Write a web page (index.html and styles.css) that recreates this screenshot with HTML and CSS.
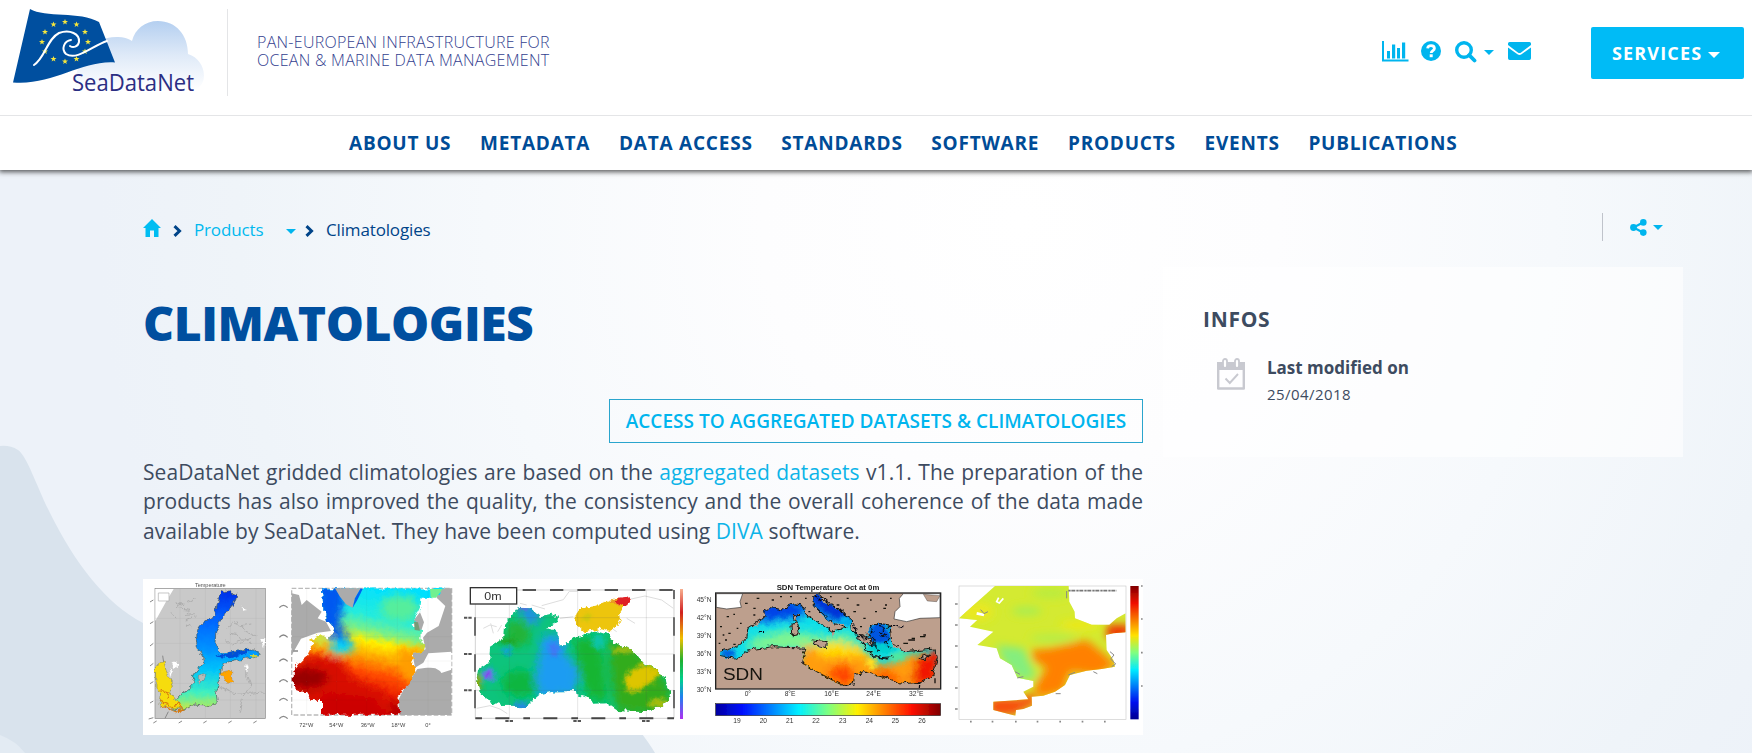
FILE: index.html
```html
<!DOCTYPE html>
<html lang="en">
<head>
<meta charset="utf-8">
<title>Climatologies - SeaDataNet</title>
<link rel="stylesheet" href="styles.css">
</head>
<body>
<header class="header">
  <div class="topbar">
    <svg class="logo" width="214" height="96" viewBox="0 0 214 96">
      <defs>
        <linearGradient id="cloud" x1="0" y1="0" x2="0" y2="1">
          <stop offset="0" stop-color="#b4cff0"/><stop offset=".5" stop-color="#dfeaf8"/><stop offset="1" stop-color="#ffffff"/>
        </linearGradient>
        <path id="star" d="M0-3.1.8-1H3L1.2.4 1.9 2.6 0 1.3-1.9 2.6-1.2.4-3-1H-.8Z"/>
      </defs>
      <path d="M75 88C75 60 92 36 118 37Q126 37 132 41C135 29 145 21 158 21C176 21 188 35 188 54C198 57 204 66 204 76Q204 84 196 90Z" fill="url(#cloud)"/>
      <path d="M30 9C45 18 80 11 99 22L115 62.500C82 60 52 86 13 82.500Z" fill="#004f9f"/>
      <g fill="#f5e63c">
        <use href="#star" x="65" y="22"/><use href="#star" x="76.500" y="24.500"/><use href="#star" x="85" y="32"/><use href="#star" x="88" y="42"/><use href="#star" x="85" y="51.500"/><use href="#star" x="76.500" y="59"/><use href="#star" x="65" y="61.500"/><use href="#star" x="53.500" y="59"/><use href="#star" x="45" y="51.500"/><use href="#star" x="42" y="42"/><use href="#star" x="45" y="32"/><use href="#star" x="53.500" y="24.500"/>
      </g>
      <path d="M34 65C45 58 47 39 59 33C70 29 80 34 79 42C78 47 73 48 70 46M71 40C64 41 61 49 66 54C77 61 92 46 107 41" fill="none" stroke="#fff" stroke-width="2" stroke-linecap="round"/>
      <text class="logo-text" x="72" y="90.500" textLength="122" lengthAdjust="spacingAndGlyphs">SeaDataNet</text>
    </svg>
    <p class="tagline">PAN-EUROPEAN INFRASTRUCTURE FOR<br>OCEAN &amp; MARINE DATA MANAGEMENT</p>
    <div class="tools">
      <svg class="icon-chart" width="27" height="21" viewBox="0 0 27 21"><path d="M1 0V19.500H26.500" fill="none" stroke="#00b5ee" stroke-width="2"/><path d="M5 10h3v7.500H5zM10 3.500h3.200v14H10zM15 7h3v10.500h-3zM20 1.500h3.200v16H20z" fill="#00b5ee"/></svg>
      <svg class="icon-help" width="20" height="20" viewBox="0 0 20 20"><circle cx="10" cy="10" r="10" fill="#00b5ee"/><path d="M6.600 7.300C7 3.700 13.400 3.600 13.400 7.500C13.400 9.500 10.200 9.800 10.200 12" fill="none" stroke="#fff" stroke-width="2.800"/><path d="M8.700 13.300h3v2.900h-3z" fill="#fff"/></svg>
      <svg class="icon-search" width="22" height="22" viewBox="0 0 22 22"><circle cx="9" cy="9" r="7.300" fill="none" stroke="#00b5ee" stroke-width="3.400"/><path d="M14.200 14.200 19.500 19.500" stroke="#00b5ee" stroke-width="3.800" stroke-linecap="round"/></svg>
      <i class="caret caret-search"></i>
      <svg class="icon-mail" width="23" height="18" viewBox="0 0 23 18"><path d="M0 1.500Q0 0 1.500 0H21.500Q23 0 23 1.500V3L12.800 10.700Q11.500 11.500 10.200 10.700L0 3ZM0 5.500 9.500 12.300Q11.500 13.500 13.500 12.300L23 5.500V16.300Q23 18 21.300 18H1.700Q0 18 0 16.300Z" fill="#00b5ee"/></svg>
    </div>
    <a class="services"><span>SERVICES</span><i class="caret caret-white"></i></a>
  </div>
  <nav class="nav">
    <a class="nav-item">ABOUT US</a><a class="nav-item">METADATA</a><a class="nav-item">DATA ACCESS</a><a class="nav-item">STANDARDS</a><a class="nav-item">SOFTWARE</a><a class="nav-item">PRODUCTS</a><a class="nav-item">EVENTS</a><a class="nav-item">PUBLICATIONS</a>
  </nav>
</header>
<div class="page">
  <svg class="backdrop" viewBox="0 0 1752 583" width="1752" height="583">
    <path d="M0 276Q10 275 18 280C27 286 37 317 50 343C75 393 105 433 143 453L600 513Q645 565 655 583H0Z" fill="#d9e3ed"/>
    <path d="M0 565Q16 571 25 583H0Z" fill="#e3ebf3"/>
  </svg>
  <div class="crumb-row">
    <div class="crumbs">
      <svg class="icon-home" width="18" height="18" viewBox="0 0 18 18"><path d="M9 0 18 9H15.500V18H11V11.500H7V18H2.500V9H0Z" fill="#00bdf2"/></svg>
      <svg class="chevron-first" width="9" height="12" viewBox="0 0 9 12"><path d="M1.500 1.200 6.500 6 1.500 10.800" fill="none" stroke="#004489" stroke-width="3"/></svg>
      <a class="crumb-link">Products</a>
      <i class="caret caret-crumb"></i>
      <svg class="chevron-second" width="9" height="12" viewBox="0 0 9 12"><path d="M1.500 1.200 6.500 6 1.500 10.800" fill="none" stroke="#004489" stroke-width="3"/></svg>
      <span class="crumb-current">Climatologies</span>
    </div>
    <div class="share">
      <svg width="17" height="17" viewBox="0 0 17 17"><path d="M13 3.500 3.500 8.500 13 13.500" fill="none" stroke="#00b5ee" stroke-width="2.200"/><g fill="#00b5ee"><circle cx="3.500" cy="8.500" r="3.400"/><circle cx="13.300" cy="3.400" r="3.300"/><circle cx="13.300" cy="13.600" r="3.300"/></g></svg>
      <i class="caret"></i>
    </div>
  </div>
  <div class="columns">
    <main class="main">
      <h1 class="title">CLIMATOLOGIES</h1>
      <div class="button-row"><a class="access">ACCESS TO AGGREGATED DATASETS &amp; CLIMATOLOGIES</a></div>
      <p class="intro">SeaDataNet gridded climatologies are based on the <a class="link">aggregated datasets</a> v1.1. The preparation of the products has also improved the quality, the consistency and the overall coherence of the data made available by SeaDataNet. They have been computed using <a class="link">DIVA</a> software.</p>
      <svg class="maps" width="1000" height="156" viewBox="0 0 1000 156">
        <defs>
          <filter id="soft" x="-5%" y="-5%" width="110%" height="110%"><feGaussianBlur stdDeviation="1.500"/></filter>
          <filter id="coast" x="-5%" y="-5%" width="110%" height="110%"><feTurbulence type="fractalNoise" baseFrequency=".055" numOctaves="3" seed="4" result="n"/><feDisplacementMap in="SourceGraphic" in2="n" scale="20" xChannelSelector="R" yChannelSelector="G"/></filter>
          <filter id="melt" x="-30%" y="-30%" width="160%" height="160%"><feGaussianBlur stdDeviation="13"/></filter>
          <filter id="melt-small" x="-40%" y="-40%" width="180%" height="180%"><feGaussianBlur stdDeviation="7"/></filter>
          <linearGradient id="jet" x1="0" x2="1" y1="0" y2="0"><stop offset="0" stop-color="#0000a0"/><stop offset=".12" stop-color="#0010ff"/><stop offset=".37" stop-color="#00f0ff"/><stop offset=".5" stop-color="#7dff80"/><stop offset=".63" stop-color="#fff000"/><stop offset=".87" stop-color="#ff1000"/><stop offset="1" stop-color="#800000"/></linearGradient>
          <linearGradient id="jet-down" x1="0" x2="0" y1="0" y2="1"><stop offset="0" stop-color="#800000"/><stop offset=".13" stop-color="#f01000"/><stop offset=".37" stop-color="#ffe000"/><stop offset=".5" stop-color="#80ff80"/><stop offset=".63" stop-color="#00eaff"/><stop offset=".87" stop-color="#0010f0"/><stop offset="1" stop-color="#000090"/></linearGradient>
          <linearGradient id="rainbow" x1="0" x2="0" y1="0" y2="1"><stop offset="0" stop-color="#f8b090"/><stop offset=".18" stop-color="#d02020"/><stop offset=".38" stop-color="#f0c000"/><stop offset=".55" stop-color="#20b030"/><stop offset=".7" stop-color="#00d090"/><stop offset=".83" stop-color="#2080f0"/><stop offset="1" stop-color="#b030f0"/></linearGradient>
          <linearGradient id="baltic" x1="0" x2="0" y1="0" y2="1"><stop offset="0" stop-color="#0030e8"/><stop offset=".22" stop-color="#0060ff"/><stop offset=".5" stop-color="#0095ff"/><stop offset=".66" stop-color="#00c5fa"/><stop offset=".85" stop-color="#40f0c0"/><stop offset="1" stop-color="#d0e840"/></linearGradient>
          <linearGradient id="atlantic" gradientUnits="userSpaceOnUse" x1="720" y1="40" x2="640" y2="420"><stop offset="0" stop-color="#00e0ff"/><stop offset=".22" stop-color="#25ecdd"/><stop offset=".34" stop-color="#80f080"/><stop offset=".42" stop-color="#fff000"/><stop offset=".53" stop-color="#ffa800"/><stop offset=".66" stop-color="#ff4a00"/><stop offset=".9" stop-color="#e00800"/></linearGradient>
          <clipPath id="clip-atlantic"><path d="M546 40H912L898 58 870 68H842L838 100 818 150 840 165 838 192 856 212 850 230 818 236 816 270 830 280 808 325 782 350 774 372 778 419H546V378L512 374 500 352 468 345 458 330V290L476 266 500 245 512 220 520 200 506 195 540 178 562 190 575 180 583 160 562 136 550 100Z"/></clipPath>
          <clipPath id="clip-black"><path d="M176 95 212 97 240 124 275 116 294 125 292 142 258 160 284 166 295 175 297 212 315 210 345 188 370 182 372 174 395 176 410 166 445 177 450 195 475 210 515 224 545 260 590 285 604 302 618 310 620 330 631 350 625 375 600 395 560 408 470 405 440 385 400 386 390 370 350 360 348 348 285 349 240 358 205 388 185 402 175 392 125 393 82 376 65 358 62 335 48 325 54 285 80 268 88 255 90 215 130 190 132 150 165 110Z"/></clipPath>
          <clipPath id="clip-med"><path d="M90 229 110 224 150 210 170 188 174 160 205 146 222 128 222 108 240 98 275 105 310 86 334 90 350 120 385 140 425 168 428 195 405 212 372 202 365 197 372 212 408 218 440 165 470 160 460 148 430 145 395 118 370 90 368 70 385 57 400 80 455 112 480 125 484 165 510 185 540 180 534 155 565 145 600 150 600 185 610 215 640 230 700 225 738 222 742 250 725 305 690 322 640 326 575 308 520 290 495 300 488 330 465 335 430 320 380 290 345 270 335 245 348 220 330 215 250 215 175 225 140 250 105 248 90 242Z"/></clipPath>
          <clipPath id="clip-red"><path d="M165 33H386L388 80 404 110 405 130 455 149 508 149 530 130 557 115V172L520 175 498 180 500 225 520 255 525 275 485 282 440 287 390 300 375 330 345 350 310 362 275 365 276 392 250 402 228 405 226 422 160 405V380L265 373 250 350 280 335 280 318 232 308 215 270 180 250 170 220 112 210 160 170 90 155 112 135 57 130Z"/></clipPath>
        </defs>
        <rect width="1000" height="156" fill="#fff"/>
        <g transform="translate(-3 -4) scale(.33333)" filter="url(#soft)">
          <text class="map-label" x="165" y="35" textLength="92" font-size="17" fill="#555">Temperature</text>
          <rect x="45" y="41" width="331" height="390" fill="#c9c9c9" stroke="#888" stroke-width="2"/>
          <path d="M46 42H101L78 80 46 138Z" fill="#fff"/><path d="M55 54h32v24H55z" fill="#fff" stroke="#aaa" stroke-width="2"/>
          <path d="M120 42V430M196 42V430M271 42V430M348 42V430M46 130H375M46 205H375M46 325H375M46 375H375" stroke="#b5b5b5"/>
          <g filter="url(#coast)">
          <path d="M110 80l18 8-22 12 45 6-15 12 28-2M96 115l15 18M140 80l25-12M170 120l-30 15M135 150l22 8M260 160l20-18 28 12 12 18 26 10M265 175l25 3 15 18 30-6M255 190l18 18 28-10M290 140l12 12 32-5M300 205l22-10 18 14M230 330l40 20 60 8 40-4M320 290l12 40-25 40-10 45" fill="none" stroke="#a0a0a0" stroke-width="2"/>
          <path d="M360 190l12 30 4-30zM315 268l12 8-5 16zM95 265l18-3-3 15-8 5zM306 95l14 3-8 10zM90 280l10 8-7 20z" fill="#fff"/>
          <path d="M238 65Q245 48 265 48L290 58 287 78Q282 92 268 95L250 125 234 143Q238 160 230 178L228 205Q230 225 245 232L270 235Q305 220 340 222L361 238 335 247 270 260 245 272 238 310 228 350 232 380 210 392 165 387 130 407 95 402 106 375 130 350 158 340Q155 315 165 295L193 262 178 225Q164 200 172 170Q180 148 195 142L223 125Z" fill="url(#baltic)" stroke="#455" stroke-width="2"/>
          <path d="M225 245 285 230 335 222 325 234 270 250Z" fill="#0050d8"/><path d="M325 236 361 238 338 245Z" fill="#c9d040"/>
          <path d="M46 275 72 260 80 290 100 330 92 355 106 372 135 402 95 398 60 390 65 355 48 340Z" fill="#f6dc10" stroke="#885" stroke-width="2"/>
          <path d="M60 378l35 15 18-6 18 18-20 6-45-18M65 350l20 4-4 18" fill="none" stroke="#d87a10" stroke-width="4"/>
          <path d="M237 292 275 286 276 313 264 326 252 307Z" fill="#ffa400" stroke="#777"/><path d="M175 303l20-5-8 20-12 8z" fill="#b7bcb8" stroke="#555"/>
          </g>
          <path d="M68 242l3 20M75 430l10-20M40 75l-10 6M40 140l-10 6M40 205l-10 8M40 265l-10 8M40 320l-10 6M40 378l-10 6M40 428l-14 4M50 438l-10 6M126 438l-10 6M200 438l-10 6M275 438l-10 6M350 438l-10 6" stroke="#888" stroke-width="3"/>
          <rect x="455" y="40" width="480" height="380" fill="#fff" stroke="#bbb" stroke-width="4" stroke-dasharray="14 6"/>
          <path d="M455 55l22 5 8 30 15-15 45 35-12 20 25 10 15 28-40 5-50 18-28 50V55zM842 172l-22-35 20-25 12 30zM890 68l5-28h40V230l-70 5-15 28-25 15-8-45 40-10-8-35 12-15 35-20 20-60zM832 282l60-8 12 20 30-10V420H778L775 375 790 345Z" fill="#ababab"/>
          <path d="M845 275q30-15 45-40l20 8 24-10v45l-30 12-18-10z" fill="#fff"/>
          <g filter="url(#coast)"><g clip-path="url(#clip-atlantic)">
            <rect x="455" y="38" width="480" height="384" fill="url(#atlantic)"/>
            <g filter="url(#melt)"><path d="M525 20H620L600 150 635 200 600 215 540 150Z" fill="#0059f0"/><ellipse cx="605" cy="215" rx="38" ry="20" fill="#00d8ff"/><ellipse cx="540" cy="192" rx="28" ry="12" fill="#b0f060"/><path d="M430 290 510 240 600 250 640 310 740 350 780 440H430Z" fill="#d80800"/><ellipse cx="490" cy="310" rx="75" ry="32" fill="#980000"/><path d="M550 350 700 370 760 440H540Z" fill="#cc0500"/><ellipse cx="780" cy="100" rx="60" ry="40" fill="#55ee9c"/><path d="M765 220h100v85l-70 20z" fill="#ff9d00"/><ellipse cx="768" cy="410" rx="14" ry="36" fill="#a80000"/></g>
          </g></g>
          <path d="M585 40H662L645 70 638 98 618 88 600 65Z" fill="#ababab"/><path d="M662 40 645 70 638 98 652 75 668 42Z" fill="#0060f0"/>
          <path d="M870 42h38l-20 26h-16z" fill="#70f090"/><path d="M822 140l12 2 6 25-16-2z" fill="#779a77"/>
          <path d="M500 42V418M590 42V418M680 42V418M772 42V418M864 42V418M456 185H935M456 258H935M456 320H935M456 375H935" stroke="#776" stroke-opacity=".18"/>
          <path d="M418 98q12-14 25 0M418 187q12-14 25 0M418 259q12-14 25 0M418 321q12-14 25 0M418 377q12-14 25 0M418 431q12-14 25 0M460 228h14" fill="none" stroke="#888" stroke-width="4"/>
          <g class="map-label" font-size="17" fill="#444"><text x="478" y="456">72°W</text><text x="568" y="456">54°W</text><text x="662" y="456">36°W</text><text x="754" y="456">18°W</text><text x="856" y="456">0°</text></g>
        </g>
        <g transform="translate(317 -4) scale(.33333)" filter="url(#soft)">
          <path d="M46 45H642V430H46Z" fill="#fff" stroke="#bbb" stroke-width="2"/>
          <path d="M188 45H642" stroke="#555" stroke-width="6" stroke-dasharray="40 42"/><path d="M46 430H642" stroke="#444" stroke-width="6" stroke-dasharray="20 40 42 42"/><path d="M45 127V182M45 238V290M45 345V400M642 45V72M642 127V182M642 238V290M642 345V400" stroke="#555" stroke-width="5"/>
          <path d="M245 92l65-18 18-25h25M500 75l55-12 50 12 35 25M70 160l20-10 20 5M92 145l8 30M125 150l-12 20M180 85l20 5M215 90l40 12M50 400l40-8 30 10 22 14M300 130l40-5M500 130l25 15M440 150l30 20" fill="none" stroke="#ddd" stroke-width="3"/>
          <g filter="url(#coast)">
          <g clip-path="url(#clip-black)"><rect x="40" y="85" width="600" height="330" fill="#08c47b"/><g filter="url(#melt)"><ellipse cx="175" cy="175" rx="38" ry="40" fill="#20b438"/><ellipse cx="180" cy="325" rx="55" ry="38" fill="#10b640"/><path d="M245 180H305L320 240 360 290 340 360 240 370 225 310Z" fill="#1f9cf2"/><path d="M200 85 245 130 220 150 180 120Z" fill="#248af0"/><path d="M345 190 400 190 430 240 440 380 390 370 350 280Z" fill="#14b532"/><path d="M450 180 580 260 640 360 590 420 470 410 450 300Z" fill="#31ac1d"/></g><g filter="url(#melt-small)"><path d="M495 310 515 285 550 265 605 285 580 320 540 345 500 350Z" fill="#ddc500"/><ellipse cx="490" cy="225" rx="38" ry="10" fill="#a5bd10"/><ellipse cx="600" cy="385" rx="35" ry="13" fill="#a9bd10"/><circle cx="87" cy="298" r="22" fill="#18a8d0"/><circle cx="86" cy="299" r="13" fill="#8a30f0"/><ellipse cx="140" cy="228" rx="14" ry="10" fill="#18a0dd"/><ellipse cx="185" cy="395" rx="28" ry="14" fill="#208ae0"/><ellipse cx="282" cy="222" rx="14" ry="25" fill="#3f78f5"/><ellipse cx="415" cy="200" rx="18" ry="22" fill="#10c4a8"/><ellipse cx="54" cy="325" rx="12" ry="30" fill="#8aa810"/><ellipse cx="190" cy="98" rx="20" ry="8" fill="#6560f0"/><ellipse cx="142" cy="198" rx="28" ry="10" fill="#22a421"/></g></g>
          <path d="M344 125 362 100 410 92 450 75 475 68 490 95 480 110 482 130 470 155 450 168 425 160 395 168 372 172 352 152Z" fill="#edc50c"/><path d="M450 76 475 68 492 78 496 92 470 90Z" fill="#ed9a20"/><path d="M474 68 512 64 511 85 490 94 470 82Z" fill="#df2025"/><circle cx="380" cy="128" r="14" fill="#d0c810" filter="url(#melt-small)"/>
          </g>
          <path d="M148 90V430M353 46V430M559 46V430M46 128H642M46 237H642M46 346H642" stroke="#555" stroke-opacity=".22" stroke-width="2"/>
          <rect x="31" y="38" width="139" height="49" fill="#fff" stroke="#333" stroke-width="4"/><text class="map-label" x="73" y="76" font-size="34" textLength="52" lengthAdjust="spacingAndGlyphs" fill="#333">0m</text>
          <path d="M12 128H38M12 237H38M12 346H38M136 438h24M340 438h24M546 438h24" stroke="#555" stroke-width="6" stroke-dasharray="10 3"/>
          <rect x="660" y="42" width="9" height="390" fill="url(#rainbow)"/>
        </g>
        <g transform="translate(547 -4) scale(.33333)" filter="url(#soft)">
          <text class="map-label map-bold" x="260" y="45" textLength="308" lengthAdjust="spacingAndGlyphs" font-size="20" fill="#222">SDN Temperature Oct at 0m</text>
          <rect x="77" y="54" width="675" height="288" fill="#bd9f8d" stroke="#222" stroke-width="4"/>
          <path d="M79 56H158L150 80 154 97 110 102 79 97ZM640 56H750V128L690 130 650 140 612 132 615 110 630 95 628 70Z" fill="#fff" stroke="#333" stroke-width="2"/><path d="M700 58 750 62 740 80 712 78Z" fill="#bd9f8d" stroke="#222"/>
          <path d="M165 85h8M190 100h7M200 70h8M245 75h7M270 65h6M110 125h7M130 118h5M90 155h6M115 175h7M140 160h5M105 195h6M130 208h7M150 145h5M190 120h6M300 65h6M345 70h5M420 65h5M440 90h8M500 90h8M540 75h5M580 100h8M600 70h5M520 130h7M555 110h6M640 205h14M655 195h20M665 190h10M690 185h16M700 180h8M585 90h6M490 110h8M510 155h6M355 110h6M735 310v15M98 180h5M86 205h5M470 70h6" stroke="#171310" stroke-width="4"/>
          <g filter="url(#coast)">
          <g clip-path="url(#clip-med)"><rect x="78" y="56" width="674" height="284" fill="#10dfe8"/><g filter="url(#melt)"><path d="M210 80H350L340 125 260 135 210 145Z" fill="#0040e8"/><path d="M350 40H420L500 120 470 145 420 135 360 90Z" fill="#0030d8"/><path d="M175 195 290 165 410 185 470 175 530 220 400 225 180 225Z" fill="#80f590"/><path d="M330 220 440 200 520 220 560 270 620 260 650 240 750 230V350H320Z" fill="#ff9d08"/><path d="M380 220 430 200 530 230 545 245 380 240Z" fill="#ffe100"/><path d="M400 290 470 265 500 300 470 345Z" fill="#ff4300"/><path d="M680 250 760 215 735 330 660 330Z" fill="#f01800"/><path d="M540 285 600 285 650 330 570 325Z" fill="#ff5a00"/></g><g filter="url(#melt-small)"><ellipse cx="115" cy="236" rx="23" ry="14" fill="#0060e0"/><ellipse cx="568" cy="180" rx="34" ry="38" fill="#0055e0"/><ellipse cx="575" cy="222" rx="45" ry="16" fill="#00d2d0"/><ellipse cx="625" cy="245" rx="25" ry="15" fill="#50e8a0"/><ellipse cx="545" cy="265" rx="18" ry="15" fill="#ffe020"/><ellipse cx="465" cy="135" rx="18" ry="14" fill="#00b7ef"/></g></g>
          <path d="M90 229 150 210 170 188 174 160 222 128 222 108 240 98 275 105 310 86 334 90 350 120 425 168 440 165 470 160 430 145 370 90 368 70 385 57 455 112 480 125 484 165 515 200 540 235 570 248 610 245M534 155 565 145 600 150 605 200 640 230 738 222 742 250 725 305 690 322 640 326 520 290 495 300 488 330 465 335 380 290 335 260 348 220 250 215 175 225 140 250 90 242" fill="none" stroke="#17130f" stroke-width="3"/>
          <path d="M306 148 322 142 328 178 308 182ZM312 118 323 120 320 140 311 136ZM366 195 412 200 410 218 372 208ZM540 190 510 178 498 185 520 205 550 208ZM688 250 716 240 705 255Z" fill="#bd9f8d" stroke="#17130f" stroke-width="3"/>
          <path d="M375 60 390 75 400 68 420 90 450 105 470 125M490 145 498 180 530 190 510 205M535 155 548 170 535 180 555 195 548 210 570 228M555 150 585 160 570 175 598 190 580 205 604 220M550 245 595 252M690 318 688 342M210 170h15M595 155 640 155" fill="none" stroke="#0b1118" stroke-width="4" stroke-dasharray="9 3"/>
          </g>
          <text class="map-label" x="99" y="316" textLength="120" lengthAdjust="spacingAndGlyphs" font-size="50" fill="#171310">SDN</text>
          <g class="map-label" font-size="20" fill="#333"><text x="20" y="80">45°N</text><text x="20" y="136">42°N</text><text x="20" y="188">39°N</text><text x="20" y="243">36°N</text><text x="20" y="298">33°N</text><text x="20" y="350">30°N</text><text x="164" y="363">0°</text><text x="284" y="363">8°E</text><text x="403" y="363">16°E</text><text x="529" y="363">24°E</text><text x="657" y="363">32°E</text><text x="130" y="445">19</text><text x="209" y="445">20</text><text x="288" y="445">21</text><text x="367" y="445">22</text><text x="447" y="445">23</text><text x="527" y="445">24</text><text x="605" y="445">25</text><text x="685" y="445">26</text></g>
          <rect x="77" y="386" width="675" height="36" fill="url(#jet)" stroke="#333" stroke-width="2"/>
        </g>
        <g transform="translate(797 -4) scale(.33333)" filter="url(#soft)">
          <rect x="57" y="33" width="501" height="400" fill="#fff" stroke="#ccc" stroke-width="2"/>
          <g clip-path="url(#clip-red)"><rect x="50" y="30" width="510" height="400" fill="#d4ea30"/><g filter="url(#melt)"><ellipse cx="260" cy="108" rx="45" ry="12" fill="#a4ee55"/><ellipse cx="330" cy="55" rx="55" ry="15" fill="#b8ec40"/><ellipse cx="420" cy="150" rx="60" ry="12" fill="#f2e818"/><path d="M170 210 250 220 290 310 240 315 190 260Z" fill="#84ee7e"/><ellipse cx="340" cy="190" rx="70" ry="10" fill="#aeee50"/><ellipse cx="110" cy="110" rx="50" ry="28" fill="#eae820"/><path d="M275 225 330 220 440 195 490 235 530 270 470 300 390 290 370 350 290 370 285 330 320 280 280 255Z" fill="#ff8000"/><path d="M500 150H570V190H500Z" fill="#f03000"/><path d="M150 370 250 370 275 350 290 385 220 420 150 420Z" fill="#f84b10"/></g></g>
          <path d="M176 68l-6 12 8 4 12-14" fill="none" stroke="#fff" stroke-width="5"/><path d="M110 115l22 5" stroke="#fff" stroke-width="8"/><path d="M122 104l10 12 12-6M225 290l15 8M232 309l18-4M380 48v22M510 230l12 10-10 12 15 15-12 8M385 300l20-8M460 290l12 6M347 356h15" fill="none" stroke="#888" stroke-width="3"/><path d="M385 47H530" stroke="#777" stroke-width="5" stroke-dasharray="7 2 12 3"/>
          <path d="M45 87h8M45 150h8M45 213h8M45 276h8M45 339h8M45 402h8M90 440h5M155 440h5M225 440h5M290 440h5M358 440h5M425 440h5M492 440h5M603 33h5M603 132h5M603 233h5M603 333h5" stroke="#888" stroke-width="5"/>
          <rect x="571" y="33" width="25" height="400" fill="url(#jet-down)"/>
        </g>
      </svg>
    </main>
    <aside class="infos">
      <h2 class="infos-title">INFOS</h2>
      <div class="info-row">
        <svg class="icon-calendar" width="28" height="32" viewBox="0 0 28 32"><path d="M0 4H28V12H0Z" fill="#c8c9d0"/><path d="M1.200 5V30.500H26.800V5" fill="none" stroke="#c8c9d0" stroke-width="2.400" stroke-linejoin="round"/><g fill="#fff" stroke="#c8c9d0" stroke-width="1.800"><rect x="6" y="1" width="4" height="9" rx="2"/><rect x="18" y="1" width="4" height="9" rx="2"/></g><path d="M8.500 20.500 12.800 25 21 16" fill="none" stroke="#c8c9d0" stroke-width="1.900"/></svg>
        <div class="info-text"><strong class="info-label">Last modified on</strong><span class="info-date">25/04/2018</span></div>
      </div>
    </aside>
  </div>
</div>
</body>
</html>
```
FILE: styles.css
```css
* { box-sizing: border-box; }
body { margin: 0; width: 1752px; height: 753px; overflow: hidden; font-family: "Open Sans", "Noto Sans", sans-serif; color: #3d4b60; }
svg { display: block; flex: none; }

.header { position: relative; z-index: 1; height: 170px; background: #fff; box-shadow: 0 1px 5px 1px rgba(0, 0, 0, .65); }
.topbar { display: flex; align-items: flex-start; height: 116px; border-bottom: 1px solid #e4e5e7; }
.logo-text { font: 24px "Open Sans", sans-serif; fill: #2b2e83; }
.tagline { margin: 9px 0 0 13px; width: 1155px; height: 87px; padding: 24px 0 0 29px; border-left: 1px solid #e4e5e7; font-size: 16px; font-weight: 300; line-height: 18px; letter-spacing: .28px; color: #33418f; }
.tools { display: flex; align-items: flex-start; padding-top: 41px; width: 209px; }
.icon-help { margin-left: 12px; }
.icon-search { margin-left: 14px; }
.icon-mail { margin: 1px 0 0 14px; }
.caret { flex: none; border: 5px solid transparent; border-top-color: #00b5ee; border-bottom: 0; }
.caret-search { margin: 9px 0 0 7px; }
.caret-white { margin-top: 3px; border-width: 6px 6px 0; border-top-color: #fff; }
.services { display: flex; align-items: center; gap: 6px; width: 153px; height: 52px; margin-top: 27px; padding-left: 21px; border-radius: 2px; background: #00bbf6; color: #fff; font-size: 18px; font-weight: 700; line-height: 24px; letter-spacing: 1.15px; }
.nav { display: flex; gap: 28.700px; padding: 13px 0 0 349px; height: 54px; line-height: 28px; font-size: 19px; font-weight: 700; letter-spacing: .78px; white-space: nowrap; color: #004c97; }

.page { position: relative; height: 583px; padding: 0 69px 0 143px; background: radial-gradient(ellipse 920px 950px at 1020px 50px, #fff 0, #fdfdfe 28%, #f6f9fc 58%, #eff4f9 85%, #edf2f9 100%); }
.backdrop { position: absolute; left: 0; top: 0; }
.crumb-row { position: relative; display: flex; justify-content: space-between; height: 97px; padding-top: 43px; }
.crumbs { display: flex; align-items: flex-start; font-size: 17px; line-height: 24px; letter-spacing: -.15px; color: #004489; padding-top: 5px; }
.icon-home { margin-top: 1px; }
.chevron-first { margin: 7px 0 0 12px; }
.crumb-link { width: 92px; margin-left: 12px; color: #00b9ef; }
.caret-crumb { margin-top: 11px; }
.chevron-second { margin: 7px 0 0 9px; }
.crumb-current { margin-left: 12px; }
.share { display: flex; align-items: center; gap: 6px; width: 81px; height: 28px; padding-left: 27px; border-left: 1px solid #bfc3cb; }
.columns { position: relative; display: flex; gap: 20px; }
.main { width: 1000px; }
.title { margin: 23px 0 0; font-size: 48px; line-height: 66px; font-weight: 800; letter-spacing: -.45px; color: #004f9f; }
.button-row { display: flex; justify-content: flex-end; margin-top: 43px; }
.access { width: 534px; height: 44px; border: 1px solid #2aa5cd; color: #00b5ee; font-size: 19px; font-weight: 600; line-height: 42px; letter-spacing: .04px; text-align: center; white-space: nowrap; }
.intro { margin: 15px 0 0; height: 121px; font-size: 21px; line-height: 29.400px; letter-spacing: .05px; text-align: justify; }
.link { color: #0cb4e8; }
.infos { width: 520px; height: 190px; padding: 35px 0 0 40px; background: rgba(255, 255, 255, .6); }
.infos-title { margin: 0; font-size: 21px; line-height: 34px; font-weight: 700; letter-spacing: .7px; }
.info-row { display: flex; gap: 22px; padding: 19px 0 0 14px; }
.icon-calendar { margin-top: 3px; }
.info-label, .info-date { display: block; }
.info-label { font-size: 17px; line-height: 26px; font-weight: 700; }
.info-date { font-size: 15px; line-height: 27px; letter-spacing: .45px; }
.map-label { font-family: "Liberation Sans", Arial, sans-serif; }
.map-bold { font-weight: 700; }
```
